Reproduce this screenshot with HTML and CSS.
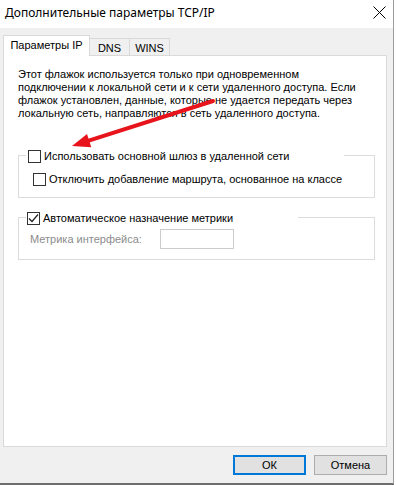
FILE: index.html
```html
<!DOCTYPE html>
<html lang="ru">
<head>
<meta charset="utf-8">
<title>Дополнительные параметры TCP/IP</title>
<link rel="stylesheet" href="styles.css">
</head>
<body>
<div class="window">
  <div class="titlebar">
    <span class="title">Дополнительные параметры TCP/IP</span>
    <svg class="close" width="13" height="13" viewBox="0 0 13 13"><path d="M0.5 0.5L12.5 12.5M12.5 0.5L0.5 12.5" stroke="#000" stroke-width="1" fill="none"/></svg>
  </div>
  <div class="body">
    <div class="tabs">
      <div class="tab active">Параметры IP</div>
      <div class="tab">DNS</div>
      <div class="tab">WINS</div>
    </div>
    <div class="panel">
      <p class="desc">Этот флажок используется только при одновременном подключении к локальной сети и к сети удаленного доступа. Если флажок установлен, данные, которые не удается передать через локальную сеть, направляются в сеть удаленного доступа.</p>
      <div class="group group1">
        <div class="head head1">
          <span class="cb"></span>
          <span class="label">Использовать основной шлюз в удаленной сети</span>
        </div>
        <div class="row row-sub">
          <span class="cb"></span>
          <span class="label">Отключить добавление маршрута, основанное на классе</span>
        </div>
      </div>
      <div class="group group2">
        <div class="head head2">
          <span class="cb checked"><svg width="11" height="11" viewBox="0 0 11 11"><path d="M1 5.5L4 8.5L10 1.5" stroke="#222" stroke-width="1.2" fill="none"/></svg></span>
          <span class="label">Автоматическое назначение метрики</span>
        </div>
        <div class="row row-metric">
          <span class="label disabled">Метрика интерфейса:</span>
          <span class="input"></span>
        </div>
      </div>
    </div>
    <div class="buttons">
      <div class="btn default">ОК</div>
      <div class="btn">Отмена</div>
    </div>
  </div>
</div>
<svg class="arrow" width="397" height="485" viewBox="0 0 397 485">
  <line x1="213" y1="101" x2="88" y2="140.8" stroke="#e8141b" stroke-width="4" stroke-linecap="round"/>
  <polygon points="72,146 91.3,147.2 87,133.9" fill="#e8141b"/>
</svg>
</body>
</html>
```
FILE: styles.css
```css
html, body {
  margin: 0;
  padding: 0;
  background: #ffffff;
}
body {
  width: 397px;
  height: 485px;
  overflow: hidden;
  position: relative;
  font-family: "Liberation Sans", Arial, sans-serif;
  font-size: 11px;
  color: #000;
}
.window {
  width: 393px;
  height: 483px;
  border-right: 1px solid #9c9c9c;
  border-bottom: 2px solid #6d6d6d;
  background: #f0f0f0;
  display: flex;
  flex-direction: column;
}
.titlebar {
  height: 28px;
  background: #ffffff;
  display: flex;
  align-items: center;
  justify-content: space-between;
  padding: 0 7px 0 5px;
  flex: none;
}
.title {
  font-family: "Noto Sans", "Liberation Sans", sans-serif;
  font-size: 12px;
  margin-top: -4px;
}
.close {
  margin-top: -4px;
}
.body {
  flex: 1;
  padding: 7px 0 0 3px;
  display: flex;
  flex-direction: column;
}
.tabs {
  display: flex;
  align-items: flex-end;
  height: 20px;
  position: relative;
  z-index: 1;
}
.tab {
  height: 17px;
  border: 1px solid #d9d9d9;
  border-bottom: none;
  border-left: none;
  background: #f0f0f0;
  display: flex;
  align-items: center;
  justify-content: center;
  box-sizing: border-box;
  white-space: nowrap;
  padding-top: 1px;
}
.tab.active {
  height: 21px;
  margin-bottom: -1px;
  background: #ffffff;
  border-left: 1px solid #d9d9d9;
  width: 87px;
  padding-top: 0;
  padding-bottom: 2px;
}
.tab:nth-child(2) { width: 40px; }
.tab:nth-child(3) { width: 40px; }
.panel {
  width: 384px;
  height: 392px;
  box-sizing: border-box;
  background: #ffffff;
  border: 1px solid #d9d9d9;
  padding: 12px 14px 0 14px;
}
.desc {
  margin: 0;
  line-height: 13px;
  width: 350px;
}
.group {
  border: 1px solid #dcdcdc;
  width: 357px;
  box-sizing: border-box;
}
.group1 {
  margin-top: 35px;
  padding-bottom: 10px;
}
.group2 {
  margin-top: 19px;
  padding-bottom: 10px;
}
.head {
  margin-top: -8px;
  margin-left: 7px;
  height: 16px;
  background: #ffffff;
  display: flex;
  align-items: center;
  padding-left: 2px;
  box-sizing: border-box;
}
.head1 { width: 318px; }
.head2 { width: 272px; padding-left: 1px; }
.cb {
  width: 13px;
  height: 13px;
  box-sizing: border-box;
  border: 1px solid #333333;
  background: #ffffff;
  flex: none;
  display: flex;
  align-items: center;
  justify-content: center;
}
.label {
  margin-left: 3px;
  white-space: nowrap;
}
.row {
  display: flex;
  align-items: center;
}
.row-sub {
  margin-top: 7px;
  margin-left: 14px;
  height: 16px;
}
.row-metric {
  margin-top: 3px;
  margin-left: 11px;
  height: 20px;
}
.disabled {
  margin-left: 0;
  color: #8c8c8c;
  width: 130px;
}
.input {
  width: 74px;
  height: 20px;
  box-sizing: border-box;
  border: 1px solid #cccccc;
  background: #ffffff;
}
.buttons {
  display: flex;
  justify-content: flex-end;
  gap: 8px;
  margin-top: 8px;
  padding-right: 6px;
}
.btn {
  width: 73px;
  height: 20px;
  box-sizing: border-box;
  border: 1px solid #adadad;
  background: #e1e1e1;
  display: flex;
  align-items: center;
  justify-content: center;
}
.btn.default {
  border: 2px solid #0078d7;
}
.arrow {
  position: absolute;
  left: 0;
  top: 0;
  pointer-events: none;
}
```
